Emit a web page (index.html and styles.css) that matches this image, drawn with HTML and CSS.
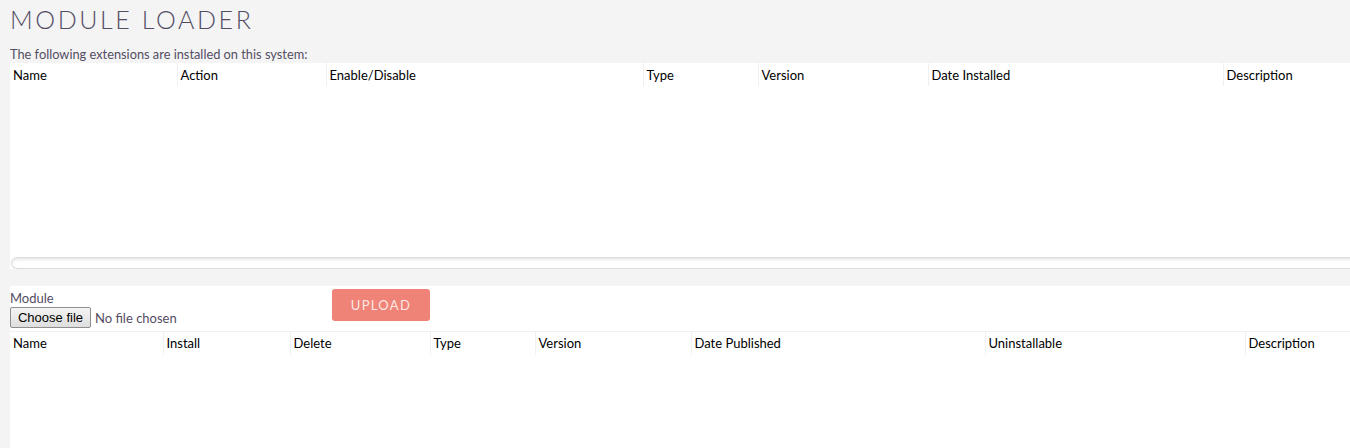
FILE: index.html
```html
<!DOCTYPE html>
<html>
<head>
<meta charset="utf-8">
<link rel="stylesheet" href="styles.css">
</head>
<body>
<h2 class="title">MODULE LOADER</h2>
<div class="intro">The following extensions are installed on this system:</div>
<div class="panel installed">
  <table class="grid grid-installed">
    <thead>
      <tr>
        <th class="c1">Name</th>
        <th class="c2">Action</th>
        <th class="c3">Enable/Disable</th>
        <th class="c4">Type</th>
        <th class="c5">Version</th>
        <th class="c6">Date Installed</th>
        <th class="c7">Description</th>
      </tr>
    </thead>
  </table>
  <div class="scroll-area"></div>
  <div class="scrollbar"></div>
</div>
<div class="gap"></div>
<div class="panel upload">
  <div class="upload-row">
    <div class="field">
      <span class="label">Module</span>
      <label class="file-wrap">
        <input type="file" class="file-native">
        <span class="file-btn">Choose file</span>
        <span class="file-name">No file chosen</span>
      </label>
    </div>
    <button class="btn">UPLOAD</button>
  </div>
  <table class="grid grid-available">
    <thead>
      <tr>
        <th class="d1">Name</th>
        <th class="d2">Install</th>
        <th class="d3">Delete</th>
        <th class="d4">Type</th>
        <th class="d5">Version</th>
        <th class="d6">Date Published</th>
        <th class="d7">Uninstallable</th>
        <th class="d8">Description</th>
      </tr>
    </thead>
  </table>
</div>
</body>
</html>
```

FILE: styles.css
```css
html, body {
  margin: 0;
  padding: 0;
}
body {
  background: #f4f4f4;
  font-family: Lato, "Liberation Sans", sans-serif;
  font-size: 13px;
  color: #534d64;
  overflow: hidden;
  width: 1350px;
  height: 448px;
  padding-left: 10px;
  box-sizing: border-box;
}
.title {
  margin: 0;
  padding-top: 4px;
  height: 42px;
  font-weight: 300;
  font-size: 25px;
  letter-spacing: 2.6px;
  line-height: 30px;
  color: #534d64;
}
.intro {
  font-size: 12.8px;
  line-height: 17px;
}
.panel {
  background: #fff;
  width: 1400px;
}
.grid {
  border-collapse: collapse;
  table-layout: fixed;
  font-size: 13px;
  color: #000;
}
.grid th {
  text-align: left;
  font-weight: 400;
  padding: 0 0 0 3px;
  height: 23px;
  border-left: 1px solid #f0f0f0;
  box-sizing: border-box;
}
.grid th:first-child {
  border-left: none;
}
.grid-installed { width: 1400px; }
.c1 { width: 167px; }
.c2 { width: 149px; }
.c3 { width: 317px; }
.c4 { width: 115px; }
.c5 { width: 170px; }
.c6 { width: 295px; }
.scroll-area {
  height: 171px;
}
.scrollbar {
  margin-left: 1px;
  height: 12px;
  border: 1px solid #dcdcdc;
  border-right: none;
  border-radius: 7px 0 0 7px;
  box-shadow: inset 0 2px 3px #e8e8e8;
  box-sizing: border-box;
  margin-bottom: 2px;
}
.gap {
  height: 15px;
}
.upload {
  height: 170px;
}
.upload-row {
  display: flex;
  align-items: flex-start;
  height: 45px;
}
.field {
  display: flex;
  flex-direction: column;
  padding-top: 4px;
  width: 322px;
}
.label {
  font-size: 13px;
  line-height: 16px;
  color: #534d64;
}
.file-wrap {
  display: flex;
  align-items: center;
  margin-top: 1px;
}
.file-native {
  display: none;
}
.file-btn {
  box-sizing: border-box;
  width: 81px;
  height: 21px;
  border: 1px solid #8f8f8f;
  border-radius: 2px;
  background: linear-gradient(#f4f4f4, #dedede);
  font-family: "Liberation Sans", Arial, sans-serif;
  font-size: 13px;
  line-height: 19px;
  color: #000;
  text-align: center;
}
.file-name {
  margin-left: 4px;
  font-size: 13px;
  color: #534d64;
}
.btn {
  margin-top: 3px;
  width: 98px;
  height: 32px;
  background: #f08377;
  border: none;
  border-radius: 3px;
  color: #fde7e4;
  font-family: Lato, "Liberation Sans", sans-serif;
  font-size: 13px;
  letter-spacing: 1.3px;
  padding: 0;
}
.grid-available {
  width: 1400px;
  border-top: 1px solid #f0f0f0;
}
.d1 { width: 153px; }
.d2 { width: 127px; }
.d3 { width: 140px; }
.d4 { width: 105px; }
.d5 { width: 156px; }
.d6 { width: 294px; }
.d7 { width: 260px; }
```
